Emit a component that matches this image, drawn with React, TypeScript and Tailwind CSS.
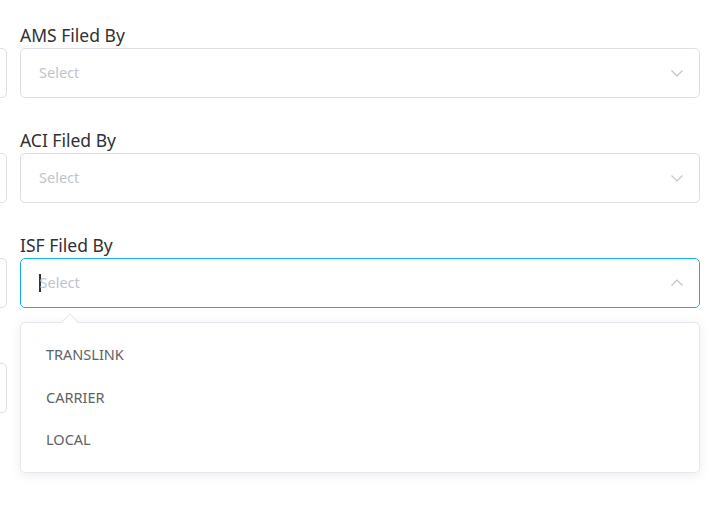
import React from "react";

const Chevron = ({ up }: { up?: boolean }) => (
  <svg width="14" height="14" viewBox="0 0 14 14" fill="none" className="shrink-0">
    {up ? (
      <path d="M1.5 9.5 L7 4 L12.5 9.5" stroke="#c0c4cc" strokeWidth="1.2" />
    ) : (
      <path d="M1.5 4.5 L7 10 L12.5 4.5" stroke="#c0c4cc" strokeWidth="1.2" />
    )}
  </svg>
);

const SelectBox = ({ focused, caret, empty }: { focused?: boolean; caret?: boolean; empty?: boolean }) => (
  <div
    className={`flex h-[50px] items-center rounded-[5px] border bg-white pl-[18px] pr-[15px] ${
      focused ? "border-[#13b1ef]" : "border-[#dcdfe6]"
    }`}
  >
    <div className="flex flex-1 items-center text-[14.5px] text-[#c0c4cc]">
      {caret && <span className="mr-[-1px] inline-block h-[18px] w-[1.5px] bg-[#333]" />}
      {!empty && <span>Select</span>}
    </div>
    {!empty && <Chevron up={focused} />}
  </div>
);

const Field = ({
  label,
  focused,
  caret,
  empty,
}: {
  label?: string;
  focused?: boolean;
  caret?: boolean;
  empty?: boolean;
}) => (
  <div className="mb-[31px]">
    <div className="h-[24px] pt-[1px] text-[17.5px] leading-[20px] text-[#303133]">{label ?? ""}</div>
    <SelectBox focused={focused} caret={caret} empty={empty} />
  </div>
);

export default function App() {
  return (
    <div
      className="relative h-[507px] w-[724px] overflow-hidden bg-white"
      style={{ fontFamily: '"Noto Sans", "Open Sans", sans-serif' }}
    >
      <div className="ml-[-673px] grid grid-cols-[680px_680px] gap-x-[13px] pt-[24px]">
        <div>
          <Field empty />
          <Field empty />
          <Field empty />
          <Field empty />
        </div>
        <div className="relative">
          <Field label="AMS Filed By" />
          <Field label="ACI Filed By" />
          <Field label="ISF Filed By" focused caret />
          <div className="absolute left-0 top-[298px] w-[680px]">
            <div className="relative rounded-[5px] border border-[#e4e7ed] bg-white pb-[10px] pt-[11px] shadow-[0_2px_12px_0_rgba(0,0,0,0.08)]">
              <div className="absolute left-[43px] top-[-7px] h-[12px] w-[12px] rotate-45 border-l border-t border-[#e4e7ed] bg-white" />
              {["TRANSLINK", "CARRIER", "LOCAL"].map((t) => (
                <div key={t} className="flex h-[42.5px] items-center pl-[25px] text-[14.5px] text-[#606266]">
                  {t}
                </div>
              ))}
            </div>
          </div>
        </div>
      </div>
    </div>
  );
}
